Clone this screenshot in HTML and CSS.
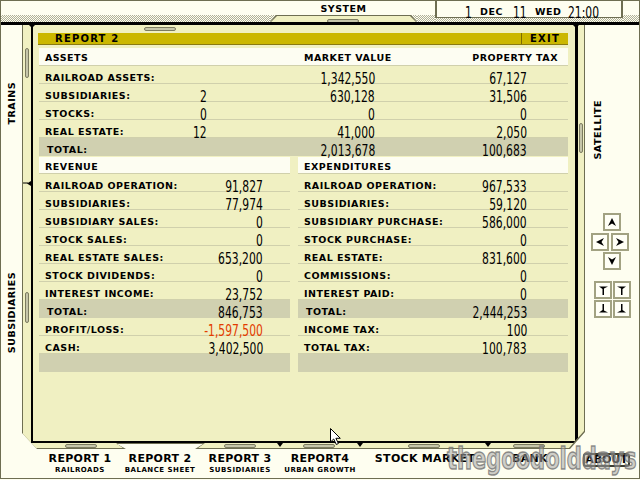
FILE: index.html
```html
<!DOCTYPE html>
<html>
<head>
<meta charset="utf-8">
<title>Report 2 - Balance Sheet</title>
<link rel="stylesheet" href="styles.css">
</head>
<body>
<div class="screen">
  <div class="topbar">
    <div class="tb-fill f1"></div>
    <div class="systab">
      <div class="sys-label">SYSTEM</div>
      <div class="sys-strip"><div class="sys-tab"><div class="sys-tab-in"><div class="pill h sys-pill"></div></div></div></div>
    </div>
    <div class="tb-fill f2"></div>
    <div class="datebox">
      <div class="date">
        <span class="dc"></span>
        <span class="dc"><span class="num">1</span></span>
        <span class="dc lab">DEC</span>
        <span class="dc"><span class="num">11</span></span>
        <span class="dc lab">WED</span>
        <span class="dc"><span class="num">21:00</span></span>
      </div>
      <div class="checker"></div>
    </div>
    <div class="tb-fill f3"></div>
  </div>

  <div class="middle">
    <div class="leftcol">
      <span class="vlabel trains">TRAINS</span>
      <span class="vlabel subs">SUBSIDIARIES</span>
    </div>

    <div class="frame">
      <div class="frame-inner">
        <div class="lstrip">
          <div class="pill v p1"></div>
          <svg class="tick" width="8" height="5" viewBox="0 0 8 5"><path d="M0 2h5" stroke="#000" stroke-width="1"/><path d="M8 0v5L4 2.5z" fill="#000"/></svg>
          <div class="pill v p2"></div>
        </div>

        <div class="panel-box">
          <div class="pill h top-pill"></div>
          <div class="titlebar"><span class="title">REPORT 2</span><span class="exit">EXIT</span></div>

          <div class="assets">
            <div class="row head a-head"><span class="lab">ASSETS</span><span class="lab">MARKET VALUE</span><span class="lab">PROPERTY TAX</span></div>
            <div class="row arow"><span class="lab">RAILROAD ASSETS:</span><span class="n"></span><span class="n"><span class="num">1,342,550</span></span><span class="n"><span class="num">67,127</span></span></div>
            <div class="row arow"><span class="lab">SUBSIDIARIES:</span><span class="n"><span class="num">2</span></span><span class="n"><span class="num">630,128</span></span><span class="n"><span class="num">31,506</span></span></div>
            <div class="row arow"><span class="lab">STOCKS:</span><span class="n"><span class="num">0</span></span><span class="n"><span class="num">0</span></span><span class="n"><span class="num">0</span></span></div>
            <div class="row arow"><span class="lab">REAL ESTATE:</span><span class="n"><span class="num">12</span></span><span class="n"><span class="num">41,000</span></span><span class="n"><span class="num">2,050</span></span></div>
            <div class="row arow total"><span class="lab">TOTAL:</span><span class="n"></span><span class="n"><span class="num">2,013,678</span></span><span class="n"><span class="num">100,683</span></span></div>
          </div>

          <div class="cols">
            <div class="col lc">
              <div class="row head brow b-head"><span class="lab">REVENUE</span></div>
              <div class="row brow"><span class="lab">RAILROAD OPERATION:</span><span class="n"><span class="num">91,827</span></span></div>
              <div class="row brow"><span class="lab">SUBSIDIARIES:</span><span class="n"><span class="num">77,974</span></span></div>
              <div class="row brow"><span class="lab">SUBSIDIARY SALES:</span><span class="n"><span class="num">0</span></span></div>
              <div class="row brow"><span class="lab">STOCK SALES:</span><span class="n"><span class="num">0</span></span></div>
              <div class="row brow"><span class="lab">REAL ESTATE SALES:</span><span class="n"><span class="num">653,200</span></span></div>
              <div class="row brow"><span class="lab">STOCK DIVIDENDS:</span><span class="n"><span class="num">0</span></span></div>
              <div class="row brow"><span class="lab">INTEREST INCOME:</span><span class="n"><span class="num">23,752</span></span></div>
              <div class="row brow total"><span class="lab">TOTAL:</span><span class="n"><span class="num">846,753</span></span></div>
              <div class="row brow"><span class="lab">PROFIT/LOSS:</span><span class="n"><span class="num neg">-1,597,500</span></span></div>
              <div class="row brow"><span class="lab">CASH:</span><span class="n"><span class="num">3,402,500</span></span></div>
              <div class="row blank"></div>
            </div>
            <div class="col rc">
              <div class="row head brow b-head"><span class="lab">EXPENDITURES</span></div>
              <div class="row brow"><span class="lab">RAILROAD OPERATION:</span><span class="n"><span class="num">967,533</span></span></div>
              <div class="row brow"><span class="lab">SUBSIDIARIES:</span><span class="n"><span class="num">59,120</span></span></div>
              <div class="row brow"><span class="lab">SUBSIDIARY PURCHASE:</span><span class="n"><span class="num">586,000</span></span></div>
              <div class="row brow"><span class="lab">STOCK PURCHASE:</span><span class="n"><span class="num">0</span></span></div>
              <div class="row brow"><span class="lab">REAL ESTATE:</span><span class="n"><span class="num">831,600</span></span></div>
              <div class="row brow"><span class="lab">COMMISSIONS:</span><span class="n"><span class="num">0</span></span></div>
              <div class="row brow"><span class="lab">INTEREST PAID:</span><span class="n"><span class="num">0</span></span></div>
              <div class="row brow total"><span class="lab">TOTAL:</span><span class="n"><span class="num">2,444,253</span></span></div>
              <div class="row brow"><span class="lab">INCOME TAX:</span><span class="n"><span class="num">100</span></span></div>
              <div class="row brow"><span class="lab">TOTAL TAX:</span><span class="n"><span class="num">100,783</span></span></div>
              <div class="row blank"></div>
            </div>
          </div>
        </div>

        <div class="rstrip"><div class="pill v p3"></div></div>

        <div class="bstrip">
          <div class="pill h b1"></div>
          <div class="pill h b2"></div>
          <div class="tri t1"></div>
          <div class="pill h b3"></div>
          <div class="tri t2"></div>
          <div class="pill h b4"></div>
          <div class="tri t3"></div>
          <div class="pill h b5"></div>
        </div>
      </div>
    </div>

    <div class="rightcol">
      <span class="vlabel sat">SATELLITE</span>
      <div class="dpad">
        <div class="btn up"><svg viewBox="0 0 10 10"><path d="M5 1L9 9L5 6.5L1 9Z"/></svg></div>
        <div class="lr">
          <div class="btn"><svg viewBox="0 0 10 10"><path d="M1 5L9 1L6.5 5L9 9Z"/></svg></div>
          <div class="btn"><svg viewBox="0 0 10 10"><path d="M9 5L1 1L3.5 5L1 9Z"/></svg></div>
        </div>
        <div class="btn down"><svg viewBox="0 0 10 10"><path d="M5 9L9 1L5 3.5L1 1Z"/></svg></div>
      </div>
      <div class="corners">
        <div class="btn"><svg viewBox="0 0 10 10"><path d="M1 1.5H10L6 3.5V10H4.5V4Z"/></svg></div>
        <div class="btn"><svg viewBox="0 0 10 10"><path d="M9 1.5H0L4 3.5V10H5.5V4Z"/></svg></div>
        <div class="btn"><svg viewBox="0 0 10 10"><path d="M1 8.5H10L6 6.5V0H4.5V6Z"/></svg></div>
        <div class="btn"><svg viewBox="0 0 10 10"><path d="M9 8.5H0L4 6.5V0H5.5V6Z"/></svg></div>
      </div>
    </div>
  </div>

  <div class="bottombar">
    <div class="blabel"><span class="big">REPORT 1</span><span class="small">RAILROADS</span></div>
    <div class="blabel"><span class="big">REPORT 2</span><span class="small">BALANCE SHEET</span></div>
    <div class="blabel"><span class="big">REPORT 3</span><span class="small">SUBSIDIARIES</span></div>
    <div class="blabel"><span class="big">REPORT4</span><span class="small">URBAN GROWTH</span></div>
    <div class="blabel wide"><span class="big">STOCK MARKET</span></div>
    <div class="blabel"><span class="big">BANK</span></div>
    <div class="about">ABOUT</div>
  </div>

  <div class="watermark">thegoodolddays</div>
  <svg class="cursor" width="12" height="18" viewBox="0 0 12 18"><path d="M0.5 0.5V14L3.7 11L6.3 16.5L8.4 15.5L5.9 10.3H10.3Z" fill="#fff" stroke="#000" stroke-width="1"/></svg>
</div>
</body>
</html>
```

FILE: styles.css
```css
* { box-sizing: border-box; margin: 0; padding: 0; }

body {
  margin: 0;
  background: #fefef0;
  font-family: "DejaVu Sans", sans-serif;
  color: #000;
}

.screen {
  position: relative;
  width: 640px;
  height: 479px;
  border: 1px solid #6e6e52;
  background: #fefef0;
  display: flex;
  flex-direction: column;
  overflow: hidden;
}

/* ---------- top bar ---------- */
.topbar { display: flex; height: 21px; flex: none; }

.tb-fill {
  background:
    linear-gradient(#fefef0, #fefef0) 0 0 / 100% 14px no-repeat,
    repeating-conic-gradient(#b0b098 0 25%, #fefef0 0 50%) 0 0 / 2px 2px;
}
.f1 { width: 269px; }
.f2 { width: 18px; }
.f3 { flex: 1; }

.systab { width: 147px; display: flex; flex-direction: column; }
.sys-label {
  height: 14px;
  font: 700 9.5px/15px "DejaVu Sans", sans-serif;
  letter-spacing: .5px;
  text-align: center;
}
.sys-strip {
  height: 7px;
  background: repeating-conic-gradient(#b0b098 0 25%, #fefef0 0 50%) 0 0 / 2px 2px;
}
.sys-tab {
  height: 7px;
  padding: 1px 1px 0;
  background: #6e6e52;
  clip-path: polygon(6px 0, calc(100% - 6px) 0, 100% 100%, 0 100%);
}
.sys-tab-in {
  height: 6px;
  background: #f0f0c2;
  clip-path: polygon(6px 0, calc(100% - 6px) 0, 100% 100%, 0 100%);
  padding-top: 3px;
}
.sys-pill { margin-left: 56px; height: 3px; }

.datebox { width: 188px; display: flex; flex-direction: column; }
.date {
  height: 17px;
  border: solid #6e6e52;
  border-width: 0 2px 1px 2px;
  background: #fefef0;
  display: grid;
  grid-template-columns: 28px 15px 33px 22px 33px auto;
  align-items: center;
  padding-top: 1px;
}
.date .num { transform-origin: 0 50%; }
.checker {
  flex: 1;
  background: repeating-conic-gradient(#b0b098 0 25%, #fefef0 0 50%) 0 0 / 2px 2px;
}

/* ---------- shared text ---------- */
.lab {
  font: 700 9.5px/15px "DejaVu Sans", sans-serif;
  letter-spacing: .5px;
  white-space: nowrap;
}
.num {
  display: inline-block;
  font: 400 15.4px/13px "DejaVu Sans", sans-serif;
  color: #000;
  transform: scaleX(.7) translateY(1px);
  transform-origin: 100% 50%;
  white-space: nowrap;
}
.neg { color: #e23c00; }

/* ---------- middle ---------- */
.middle {
  display: flex;
  height: 427px;
  flex: none;
  border-top: 3px solid #000;
}

.leftcol {
  width: 21px;
  display: flex;
  flex-direction: column;
  align-items: center;
}
.vlabel {
  writing-mode: vertical-rl;
  transform: rotate(180deg);
  font: 700 9.5px/11px "DejaVu Sans", sans-serif;
  letter-spacing: .5px;
  white-space: nowrap;
}
.trains { margin-top: 57px; }
.subs { margin-top: 148px; }

.frame {
  width: 563px;
  height: 424px;
  background: #6e6e52;
  padding: 0 1px 1px 1px;
  clip-path: polygon(0 0, 563px 0, 563px 407px, 548px 424px, 173px 424px, 181px 419px, 95px 419px, 104px 424px, 15px 424px, 0 408px);
}
.frame-inner {
  height: 423px;
  background: #f0f0c2;
  display: grid;
  grid-template-columns: 8px 547px 6px;
  grid-template-rows: 418px 5px;
  clip-path: polygon(0 0, 561px 0, 561px 406px, 546px 423px, 175px 423px, 182px 418px, 93px 418px, 100px 423px, 12px 423px, 0 411px);
}

.pill {
  border: 1px solid #7c7c60;
  border-radius: 2px;
  background: #c6c6aa;
  flex: none;
}
.pill.h { width: 32px; height: 4px; }
.pill.v { width: 4px; }

.lstrip { display: flex; flex-direction: column; align-items: center; }
.p1 { margin-top: 23px; height: 30px; }
.tick { margin-top: 103px; display: block; flex: none; }
.p2 { margin-top: 106px; height: 31px; }

.rstrip { display: flex; flex-direction: column; align-items: center; }
.p3 { margin-top: 98px; height: 30px; }

.panel-box {
  position: relative;
  border-left: 2px solid #000;
  border-right: 3px solid #000;
  border-bottom: 2px solid #000;
  padding: 2px 7px 0 5px;
}
.panel-box::before,
.panel-box::after {
  content: "";
  position: absolute;
  top: 0;
  width: 0;
  height: 0;
  border-left: 3px solid transparent;
  border-right: 3px solid transparent;
  border-top: 3px solid #000;
}
.panel-box::before { left: -4px; }
.panel-box::after { right: -4px; }

.top-pill { margin: 0 0 2px 106px; }

.titlebar {
  height: 12px;
  display: flex;
  background: #cbb700;
  border-bottom: 1px solid #8a7a10;
}
.title, .exit {
  font: 700 10px/10px "DejaVu Sans", sans-serif;
  letter-spacing: 1.2px;
  padding-top: 1px;
}
.title { flex: 1; padding-left: 17px; }
.exit { width: 47px; text-align: center; border-left: 1px solid #7c6c00; }

.assets { margin: 3px 0 0 1px; }

.row {
  height: 18px;
  padding-top: 2px;
  border-bottom: 1px solid #d0d0ac;
  display: grid;
  align-items: center;
}
.head { background: #fdfdf2; }
.a-head { grid-template-columns: 265px 1fr auto; padding-right: 10px; }
.a-head .lab:first-child { padding-left: 6px; }
.arow { grid-template-columns: 128px 40px 168px 152px; }
.arow > .lab { padding-left: 6px; }
.n { text-align: right; }
.total { background: #d0d0b0; border-bottom: 0; }
.arow.total > .lab { padding-left: 8px; }

.cols {
  display: grid;
  grid-template-columns: 251px 270px;
  column-gap: 8px;
  margin: 1px 0 0 1px;
}
.brow { grid-template-columns: 1fr auto; padding: 2px 27px 0 6px; }
.rc .brow { padding-right: 41px; }
.b-head { height: 17px; }
.brow.total { padding-left: 8px; }
.blank { background: #d0d0b0; border-bottom: 0; }

.bstrip {
  grid-column: 1 / -1;
  display: flex;
  align-items: flex-start;
}
.bstrip .pill { margin-top: 1px; height: 4px; }
.b1 { margin-left: 42px; }
.b2 { margin-left: 127px; }
.b3 { margin-left: 20px; }
.b4 { margin-left: 45px; }
.b5 { margin-left: 22px; }
.tri {
  width: 0;
  height: 0;
  border-left: 3px solid transparent;
  border-right: 3px solid transparent;
  border-top: 4px solid #000;
  flex: none;
}
.t1 { margin-left: 21px; }
.t2 { margin-left: 22px; }
.t3 { margin-left: 45px; }

/* ---------- right column ---------- */
.rightcol { flex: 1; display: flex; flex-direction: column; }
.sat { margin: 75px 0 0 7px; align-self: flex-start; }

.btn {
  width: 18px;
  height: 18px;
  border: 2px solid #a2a282;
  background: #fffff6;
  display: flex;
  align-items: center;
  justify-content: center;
}
.btn svg { width: 10px; height: 10px; fill: #000; display: block; }

.dpad { margin: 53px 0 0 6px; width: 38px; display: flex; flex-direction: column; }
.up { margin-left: 12px; }
.lr { display: flex; gap: 2px; margin-top: 2px; }
.down { margin: 1px 0 0 12px; }

.corners {
  margin: 11px 0 0 9px;
  display: grid;
  grid-template-columns: 18px 18px;
  gap: 1px;
}

/* ---------- bottom labels ---------- */
.bottombar {
  flex: 1;
  display: flex;
  padding-left: 39px;
}
.blabel {
  width: 80px;
  display: flex;
  flex-direction: column;
  align-items: center;
  padding-top: 4px;
}
.blabel.wide { width: 130px; }
.big {
  font: 700 11px/12px "DejaVu Sans", sans-serif;
  letter-spacing: .3px;
  white-space: nowrap;
}
.small {
  font: 700 7px/8px "DejaVu Sans", sans-serif;
  letter-spacing: .5px;
  margin-top: 1px;
  white-space: nowrap;
}
.about {
  margin: 4px 0 0 13px;
  width: 47px;
  height: 14px;
  border: 2px solid #3c3c30;
  border-radius: 3px;
  font: 700 11px/10px "DejaVu Sans", sans-serif;
  text-align: center;
  background: #fefef0;
}

/* ---------- overlays ---------- */
.watermark {
  position: absolute;
  left: 446px;
  top: 443px;
  font: 700 30px/30px "DejaVu Sans", sans-serif;
  color: rgba(165, 165, 165, .55);
  -webkit-text-stroke: 1.5px rgba(110, 110, 110, .75);
  transform: scaleX(.7);
  transform-origin: 0 0;
  white-space: nowrap;
  pointer-events: none;
}
.cursor { position: absolute; left: 329px; top: 427px; }
```
